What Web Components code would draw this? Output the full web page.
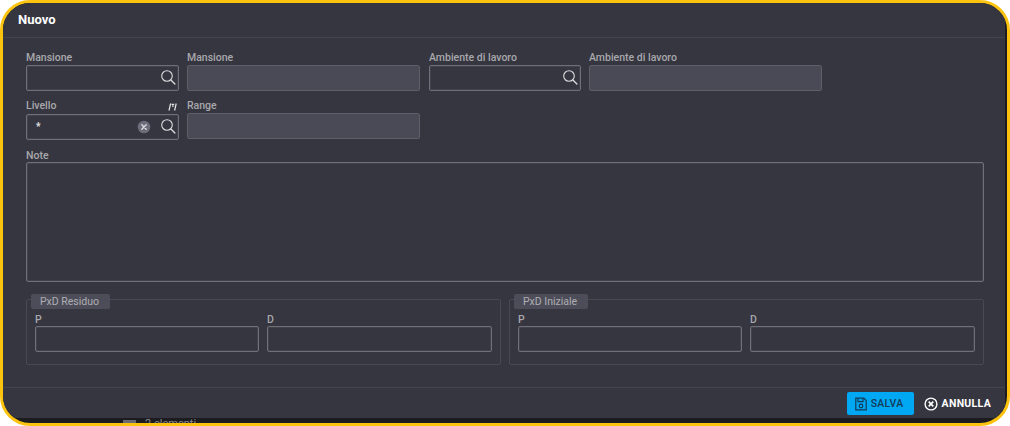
<!DOCTYPE html>
<html><head><meta charset="utf-8">
<style>
html,body{margin:0;padding:0;background:#fff;}
body{width:1010px;height:426px;overflow:hidden;font-family:Roboto,"Liberation Sans",sans-serif;}
</style></head><body>
<template id="t-frame"><style>
:host{display:block;width:1010px;height:426px;box-sizing:border-box;border:3px solid #fdc30f;border-radius:30px;background:#1b1b20;overflow:hidden;position:relative;}
.dlg{width:1002px;height:415px;background:#363640;display:flex;flex-direction:column;border-bottom-right-radius:2px;}
header{height:35px;box-sizing:border-box;border-bottom:1px solid #44444f;padding:9px 0 0 15px;font:700 13px/16px Roboto,sans-serif;color:#fff;flex:none;}
main{flex:1;padding:13px 21px 0 23px;display:flex;flex-direction:column;min-height:0;}
footer{height:31px;flex:none;box-sizing:border-box;border-top:1px solid #44444f;display:flex;justify-content:flex-end;align-items:flex-start;padding:4px 14px 0 0;gap:10px;}
.peek{position:absolute;left:120px;top:415px;display:flex;gap:9px;align-items:center;font:11px/11px Roboto,sans-serif;color:#8a8a90;}
.peek i{display:block;width:13px;height:8px;background:#6a6a72;}
</style>
<div class="dlg"><header><slot name="title"></slot></header><main><slot></slot></main><footer><slot name="actions"></slot></footer></div>
<div class="peek"><i></i><span>2 elementi</span></div>
</template>

<template id="t-row"><style>
:host{display:flex;gap:8px;align-items:flex-start;}
</style><slot></slot></template>

<template id="t-field"><style>
:host{display:block;flex:none;}
.lab{display:flex;justify-content:space-between;align-items:flex-end;height:14px;font:500 10.5px/14px Roboto,sans-serif;color:#a8a8ac;white-space:nowrap;margin-bottom:var(--lm,0);}
.lab svg{display:none;margin:0 2px 2px 0;}
.box{box-sizing:border-box;width:100%;height:var(--h,26px);border:1px solid #6f6f77;box-shadow:inset 0 0 0 1px rgba(110,110,120,.22);border-radius:2px;display:flex;align-items:center;justify-content:flex-end;position:relative;}
:host([disabled]) .box{background:#4a4a56;border-color:#5e5e68;box-shadow:none;}
:host([wild]) .lab svg{display:block;}
.val{position:absolute;left:9px;top:5px;font:700 10px/14px Roboto,sans-serif;color:#e6e6e8;}
.clear,.search{display:none;}
:host([search]) .search{display:block;margin-right:1px;}
:host([wild]) .clear{display:block;margin-right:10px;}
</style>
<div class="lab"><span id="l"></span><svg width="9" height="8" viewBox="0 0 9 8"><path d="M2.6 .5 1 7.5M8.2 .5 6.6 7.5" fill="none" stroke="#e4e4e6" stroke-width="1.2"/><path d="M3.6 1.4h2.6M4.9 1.2v2.8" fill="none" stroke="#e4e4e6" stroke-width="1.1"/></svg></div>
<div class="box"><span class="val" id="v"></span>
<svg class="clear" width="14" height="14" viewBox="0 0 14 14"><circle cx="7" cy="7" r="6.3" fill="#6c6c7a"/><path d="M4.8 4.8l4.4 4.4M9.2 4.8l-4.4 4.4" stroke="#e0e0e4" stroke-width="1.3" stroke-linecap="round"/></svg>
<svg class="search" width="16" height="16" viewBox="0 0 16 16"><circle cx="6" cy="6" r="5.3" fill="none" stroke="#dcdcde" stroke-width="1.1"/><path d="M9.9 10l4 4" stroke="#dcdcde" stroke-width="1.3" stroke-linecap="round"/></svg>
</div></template>

<template id="t-group"><style>
:host{display:block;flex:none;box-sizing:border-box;position:relative;border:1px solid #494954;border-radius:2px;height:66px;padding:13px 8px 0 8px;--lm:-1px;}
.leg{position:absolute;left:4px;top:-6px;height:15px;box-sizing:border-box;padding:0 11px 0 9px;background:#4d4d5a;border-radius:2px;font:400 10.5px/15px Roboto,sans-serif;color:#aeaeb2;white-space:nowrap;}
.in{display:flex;gap:8px;}
</style><div class="leg" id="l"></div><div class="in"><slot></slot></div></template>

<template id="t-btn"><style>
:host{display:inline-flex;align-items:center;height:23px;box-sizing:border-box;font:700 10.5px/23px Roboto,sans-serif;letter-spacing:.3px;color:#fff;white-space:nowrap;gap:4px;}
:host([primary]){background:#00a7f3;color:#123a56;border-radius:2px;padding:0 10px 0 8px;font-weight:500;gap:4px;letter-spacing:.3px;}
</style><slot name="icon"></slot><slot></slot></template>

<x-frame>
  <span slot="title">Nuovo</span>
  <x-row>
    <x-field label="Mansione" search style="width:153px"></x-field>
    <x-field label="Mansione" disabled style="width:233px"></x-field>
    <x-field label="Ambiente di lavoro" search style="width:152px;margin-left:1px"></x-field>
    <x-field label="Ambiente di lavoro" disabled style="width:233px"></x-field>
  </x-row>
  <x-row style="margin-top:8px">
    <x-field label="Livello" search wild value="*" style="width:153px;--lm:1px"></x-field>
    <x-field label="Range" disabled style="width:233px"></x-field>
  </x-row>
  <x-row style="margin-top:9px">
    <x-field label="Note" style="width:958px;--h:120px;--lm:-1px"></x-field>
  </x-row>
  <x-row style="margin-top:17px">
    <x-group label="PxD Residuo" style="width:475px">
      <x-field label="P" style="width:224px"></x-field>
      <x-field label="D" style="width:225px"></x-field>
    </x-group>
    <x-group label="PxD Iniziale" style="width:475px">
      <x-field label="P" style="width:224px"></x-field>
      <x-field label="D" style="width:225px"></x-field>
    </x-group>
  </x-row>
  <x-btn slot="actions" primary><svg slot="icon" width="12" height="14" viewBox="0 0 12 14" fill="none" stroke="#123a56" stroke-width="1.2"><path d="M.8 1.2h8l2.4 2.4v9.2H.8z"/><path d="M3 1.4v3.2h5V1.4"/><circle cx="6" cy="9" r="1.8"/></svg>SALVA</x-btn>
  <x-btn slot="actions"><svg slot="icon" width="14" height="14" viewBox="0 0 14 14" fill="none" stroke="#fff"><circle cx="7" cy="7" r="5.9" stroke-width="1.4"/><path d="M4.7 4.7l4.6 4.6M9.3 4.7l-4.6 4.6" stroke-width="1.7"/></svg>ANNULLA</x-btn>
</x-frame>
<script>
function reg(name,tid,init){customElements.define(name,class extends HTMLElement{constructor(){super();this.attachShadow({mode:'open'}).appendChild(document.getElementById(tid).content.cloneNode(true));}connectedCallback(){if(init)init(this);}});}
reg('x-frame','t-frame');reg('x-row','t-row');
reg('x-field','t-field',e=>{e.shadowRoot.getElementById('l').textContent=e.getAttribute('label')||'';e.shadowRoot.getElementById('v').textContent=e.getAttribute('value')||'';});
reg('x-group','t-group',e=>{e.shadowRoot.getElementById('l').textContent=e.getAttribute('label')||'';});
reg('x-btn','t-btn');
</script>
</body></html>
